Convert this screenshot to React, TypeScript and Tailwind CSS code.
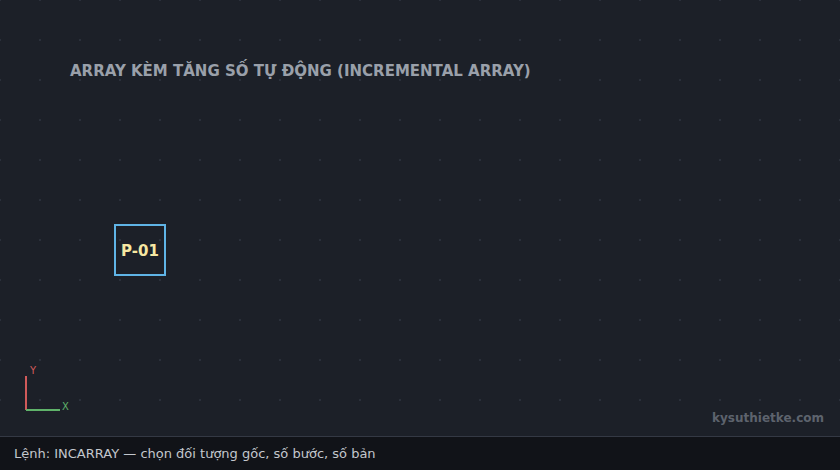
export default function App() {
  return (
    <div
      className="flex h-[470px] w-[840px] flex-col bg-[#1c2028]"
      style={{ fontFamily: '"DejaVu Sans", "Noto Sans", sans-serif' }}
    >
      {/* Drawing area with faint snap grid */}
      <div
        className="relative flex-1 overflow-hidden bg-[#1c2028]"
        style={{
          backgroundImage: "radial-gradient(circle, rgba(120,130,150,0.16) 0.8px, transparent 1px)",
          backgroundSize: "40px 40px",
          backgroundPosition: "-20px -20px",
        }}
      >
        <h1 className="pl-[70px] pt-[61px] text-[15px] font-bold leading-[20px] text-[#9aa0aa]">
          ARRAY KÈM TĂNG SỐ TỰ ĐỘNG (INCREMENTAL ARRAY)
        </h1>

        {/* Source object */}
        <div className="absolute left-[114px] top-[224px] flex h-[52px] w-[52px] items-center justify-center border-2 border-[#5fb4e6] pt-[2px]">
          <span className="text-[15px] font-bold text-[#f6e7a2]">P-01</span>
        </div>

        {/* UCS icon */}
        <svg className="absolute left-[20px] top-[362px]" width="60" height="52" viewBox="0 0 60 52">
          <line x1="6" y1="14" x2="6" y2="48" stroke="#d05a5a" strokeWidth="2" />
          <line x1="6" y1="48" x2="40" y2="48" stroke="#5fb36a" strokeWidth="2" />
          <text x="10" y="12" fontSize="10" fill="#d05a5a" fontFamily="DejaVu Sans">Y</text>
          <text x="42" y="48" fontSize="10" fill="#5fb36a" fontFamily="DejaVu Sans">X</text>
        </svg>

        <span className="absolute right-[16px] top-[410px] text-[12px] font-bold leading-[16px] text-[#5d636d]">
          kysuthietke.com
        </span>
      </div>

      {/* Command line */}
      <div className="flex h-[34px] items-center border-t border-[#343944] bg-[#111318] px-[14px]">
        <span className="text-[13px] text-[#c3c7cd]">
          Lệnh: INCARRAY — chọn đối tượng gốc, số bước, số bản
        </span>
      </div>
    </div>
  );
}
